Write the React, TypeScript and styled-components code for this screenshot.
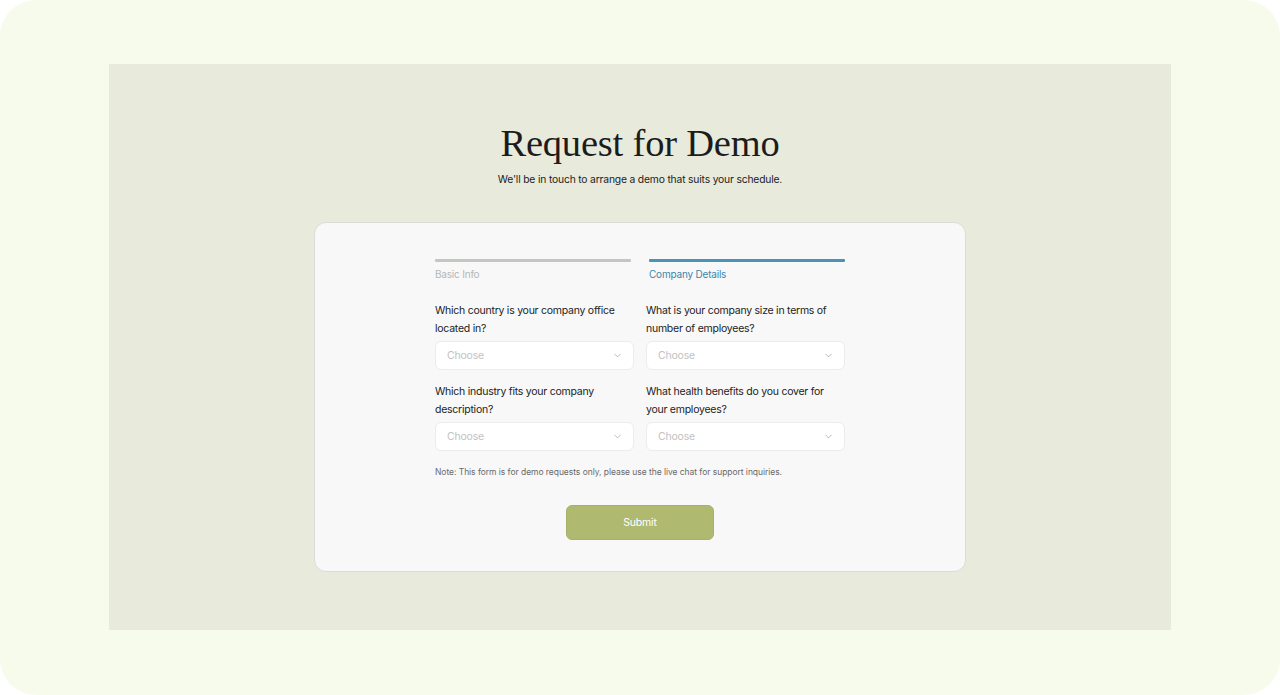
import { ChevronDown } from "lucide-react";
import styled, { createGlobalStyle } from "styled-components";

const GlobalStyle = createGlobalStyle`
  html, body {
    margin: 0;
    padding: 0;
    background: #ffffff;
  }
  * {
    box-sizing: border-box;
  }
`;

const questions = [
  "Which country is your company office located in?",
  "What is your company size in terms of number of employees?",
  "Which industry fits your company description?",
  "What health benefits do you cover for your employees?",
];

const App = () => {
  return (
    <>
      <GlobalStyle />
      <Frame>
        <Panel>
          <Title>Request for Demo</Title>
          <Subtitle>We'll be in touch to arrange a demo that suits your schedule.</Subtitle>

          <Card>
            <Content>
              <Steps>
                <Step>
                  <StepBar />
                  <StepLabel>Basic Info</StepLabel>
                </Step>
                <Step active>
                  <StepBar active />
                  <StepLabel active>Company Details</StepLabel>
                </Step>
              </Steps>

              <Fields>
                {questions.map((q) => (
                  <Field key={q}>
                    <FieldLabel>{q}</FieldLabel>
                    <Select>
                      <span>Choose</span>
                      <ChevronDown size={11} strokeWidth={1.5} color="#9a9a9a" />
                    </Select>
                  </Field>
                ))}
              </Fields>

              <Note>
                Note: This form is for demo requests only, please use the live chat for support inquiries.
              </Note>

              <SubmitRow>
                <SubmitButton>Submit</SubmitButton>
              </SubmitRow>
            </Content>
          </Card>
        </Panel>
      </Frame>
    </>
  );
};

const Frame = styled.div`
  width: 1280px;
  height: 695px;
  background: #f7fbec;
  border-radius: 36px;
  padding: 64px 109px 65px;
`;

const Panel = styled.main`
  height: 100%;
  background: #e8eadc;
  display: flex;
  flex-direction: column;
  align-items: center;
  padding-top: 57px;
`;

const Title = styled.h1`
  margin: 0;
  font-family: "Liberation Serif", "Times New Roman", serif;
  font-weight: 400;
  font-size: 38.5px;
  line-height: 44px;
  color: #1c1c1c;
  letter-spacing: -0.2px;
`;

const Subtitle = styled.p`
  margin: 7px 0 0;
  font-family: Inter, "Noto Sans", sans-serif;
  font-size: 10.3px;
  line-height: 14px;
  letter-spacing: -0.17px;
  color: #222;
`;

const Card = styled.section`
  margin-top: 36px;
  width: 652px;
  background: #f8f8f8;
  border: 1px solid #dcdcd6;
  border-radius: 12px;
  padding: 36px 0 31px;
  display: flex;
  justify-content: center;
`;

const Content = styled.div`
  width: 410px;
  font-family: Inter, "Noto Sans", sans-serif;
`;

const Steps = styled.div`
  display: grid;
  grid-template-columns: 1fr 1fr;
  column-gap: 18px;
`;

const Step = styled.div<{ active?: boolean }>`
  display: flex;
  flex-direction: column;
`;

const StepBar = styled.div<{ active?: boolean }>`
  height: 3px;
  border-radius: 1px;
  background: ${({ active }) => (active ? "#4a92b8" : "#c4c6c4")};
`;

const StepLabel = styled.span<{ active?: boolean }>`
  margin-top: 5px;
  font-size: 10px;
  line-height: 14px;
  letter-spacing: -0.2px;
  color: ${({ active }) => (active ? "#3d86ad" : "#b5b7b5")};
`;

const Fields = styled.div`
  margin-top: 21px;
  display: grid;
  grid-template-columns: 1fr 1fr;
  column-gap: 12px;
  row-gap: 13px;
`;

const Field = styled.div`
  display: flex;
  flex-direction: column;
`;

const FieldLabel = styled.label`
  font-size: 10.5px;
  line-height: 18px;
  letter-spacing: -0.25px;
  color: #222;
  padding-right: 8px;
`;

const Select = styled.div`
  margin-top: 3px;
  height: 29px;
  background: #ffffff;
  border: 1px solid #ececec;
  border-radius: 6px;
  padding: 0 10px 0 11px;
  display: flex;
  align-items: center;
  justify-content: space-between;
  font-size: 10.5px;
  letter-spacing: -0.2px;
  color: #c2c2c2;
`;

const Note = styled.p`
  margin: 15px 0 0;
  font-size: 8.5px;
  line-height: 12px;
  letter-spacing: -0.05px;
  color: #6a6a6a;
`;

const SubmitRow = styled.div`
  margin-top: 27px;
  display: flex;
  justify-content: center;
`;

const SubmitButton = styled.button`
  width: 148px;
  height: 35px;
  border: 1px solid #a7b16a;
  border-radius: 6px;
  background: #afb970;
  color: #ffffff;
  font-family: Inter, "Noto Sans", sans-serif;
  font-size: 10.5px;
  letter-spacing: -0.2px;
  cursor: pointer;
`;

export default App;
